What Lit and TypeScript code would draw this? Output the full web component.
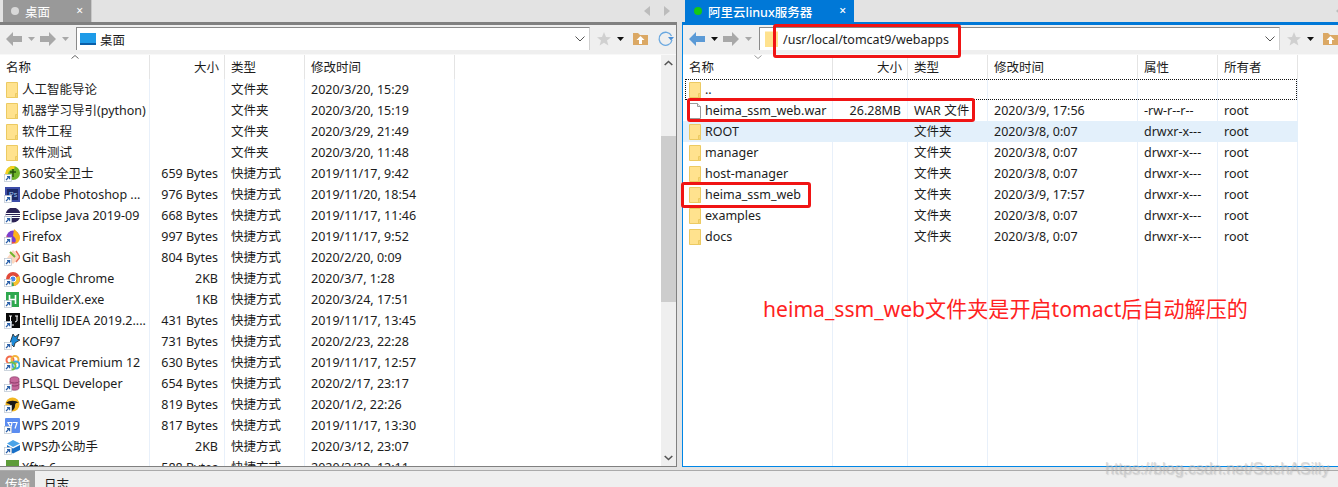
import { LitElement, html, css, svg } from "lit";
import { customElement } from "lit/decorators.js";

const folder = svg`<path d="M2.500.5h11v15h-11z" fill="#ffe28e" stroke="#ecca62"/><path d="M13.500 11.500v4h-2v-4z" fill="#f6d676" stroke="#ecca62"/>`;
const fileI = svg`<path d="M2.500.5h8l3 3v12h-11z" fill="#fff" stroke="#9a9a9a"/><path d="M10.500.5v3h3" fill="#eee" stroke="#9a9a9a"/>`;
const arrow = svg`<rect x=".5" y="8.500" width="7" height="7" fill="#fff" stroke="#b8c4d0" stroke-width=".7"/><path d="M2 14l3-3M3 10.600h2.600v2.600" stroke="#2a5fa8" stroke-width="1.200" fill="none"/>`;
const appIcons: Record<string, unknown> = {
  s360: svg`<circle cx="9" cy="7" r="7" fill="#6fb52c"/><path d="M2.500 8a7 7 0 0 1 8-6.500" stroke="#f4d020" stroke-width="3" fill="none"/><path d="M6 6h6M9 3v8" stroke="#24500c" stroke-width="1.400"/>`,
  ps: svg`<rect x="1" y="0" width="15" height="15" fill="#3c4ca8"/><rect x="3" y="2" width="11" height="11" fill="#1d2a66"/><text x="5" y="10" font-size="7" font-family="Liberation Sans" fill="#9cc4f0">Ps</text>`,
  eclipse: svg`<circle cx="9" cy="7" r="7.500" fill="#2c2255"/><path d="M1.500 5.500h15M1.500 7.500h15M2 9.500h14" stroke="#fff" stroke-width="1"/>`,
  firefox: svg`<circle cx="9" cy="8" r="6.500" fill="#7b3fd0"/><path d="M10 0c3 3 6 5 6 9a6 6 0 0 1-6 6c3-3 2-6-1-8z" fill="#ffb31a"/><path d="M3 6c1 5 5 8 9 7-3 3-9 2-10-3z" fill="#f2503c"/>`,
  git: svg`<path d="M9 0l7 7-7 7-6-6z" fill="#fbd8c0"/><path d="M12 1l4 6-4 5" stroke="#e8705a" stroke-width="1.500" fill="none"/><path d="M6 2l5 5" stroke="#6fb52c" stroke-width="2"/>`,
  chrome: svg`<circle cx="9" cy="8" r="7" fill="#e04a3a"/><path d="M9 8L3 12a7 7 0 0 0 7 3z" fill="#3aa655"/><path d="M9 8l6-3a7 7 0 0 1-5 10z" fill="#f6c32c"/><circle cx="9" cy="8" r="3" fill="#4a88e8" stroke="#fff"/>`,
  hb: svg`<rect x="2" y="0" width="13" height="15" fill="#2ea84e"/><path d="M5.500 3v9M11.500 3v9M5.500 7.500h6" stroke="#fff" stroke-width="1.600"/>`,
  idea: svg`<rect x="2" y="0" width="14" height="15" fill="#0a0a0a"/><path d="M5 3h3M6.500 3v6M5 9h3M11 3h3M13 3v5l-2 1" stroke="#fff" stroke-width="1" fill="none"/><path d="M5 12h5" stroke="#fff"/>`,
  kof: svg`<path d="M6 9l3-9 2 3 4-3-2 5 3 1-5 3-1 4z" fill="#1d8ad8" stroke="#111" stroke-width=".7"/>`,
  navicat: svg`<circle cx="6" cy="5" r="3.500" fill="none" stroke="#f26a4a" stroke-width="2"/><circle cx="11" cy="4.500" r="3.500" fill="none" stroke="#f3b33c" stroke-width="2"/><circle cx="12" cy="10" r="3.500" fill="none" stroke="#3aa8e0" stroke-width="2"/><circle cx="8" cy="11" r="3.500" fill="none" stroke="#6cc04a" stroke-width="2"/>`,
  plsql: svg`<path d="M6 3c0-3 9-3 9 0v9c0 3-9 3-9 0z" fill="#c6679a" stroke="#8a3a68" stroke-width=".7"/><path d="M6 5.500c1 2 8 2 9 0M6 8.500c1 2 8 2 9 0" stroke="#8a3a68" fill="none"/>`,
  wegame: svg`<circle cx="8.500" cy="7.500" r="7" fill="#f3b61f"/><path d="M2 6c3-3 10-3 13 0-3-1-4 1-4 3 0 2-2 5-4 5 2-3 1-7-5-8z" fill="#181818"/>`,
  wps: svg`<rect x="1" y="0" width="15" height="15" rx="1" fill="#5b8cf0"/><path d="M4 4.500h4l-1 5zM9 4.500h4l-2 6" fill="none" stroke="#fff" stroke-width="1.200"/>`,
  wpsh: svg`<path d="M9 1l7 3.500-7 3.500-6-3.500z" fill="#4aa3e8"/><path d="M3 6l6 3.500 7-3.500v5l-7 3.500-6-3.500z" fill="#1970c8"/>`,
  xftp: svg`<rect x="2" y="0" width="13" height="14" fill="#5e9c3a"/>`,
};

type Row = { n: string; s?: string; t: string; d: string; a?: string; o?: string; i: string };
const F = "文件夹", L = "快捷方式";
const leftRows: Row[] = [
  { n: "人工智能导论", t: F, d: "2020/3/20, 15:29", i: "f" },
  { n: "机器学习导引(python)", t: F, d: "2020/3/20, 15:19", i: "f" },
  { n: "软件工程", t: F, d: "2020/3/29, 21:49", i: "f" },
  { n: "软件测试", t: F, d: "2020/3/20, 11:48", i: "f" },
  { n: "360安全卫士", s: "659 Bytes", t: L, d: "2019/11/17, 9:42", i: "s360" },
  { n: "Adobe Photoshop ...", s: "976 Bytes", t: L, d: "2019/11/20, 18:54", i: "ps" },
  { n: "Eclipse Java 2019-09", s: "668 Bytes", t: L, d: "2019/11/17, 11:46", i: "eclipse" },
  { n: "Firefox", s: "997 Bytes", t: L, d: "2019/11/17, 9:52", i: "firefox" },
  { n: "Git Bash", s: "804 Bytes", t: L, d: "2020/2/20, 0:09", i: "git" },
  { n: "Google Chrome", s: "2KB", t: L, d: "2020/3/7, 1:28", i: "chrome" },
  { n: "HBuilderX.exe", s: "1KB", t: L, d: "2020/3/24, 17:51", i: "hb" },
  { n: "IntelliJ IDEA 2019.2....", s: "431 Bytes", t: L, d: "2019/11/17, 13:45", i: "idea" },
  { n: "KOF97", s: "731 Bytes", t: L, d: "2020/2/23, 22:28", i: "kof" },
  { n: "Navicat Premium 12", s: "630 Bytes", t: L, d: "2019/11/17, 12:57", i: "navicat" },
  { n: "PLSQL Developer", s: "654 Bytes", t: L, d: "2020/2/17, 23:17", i: "plsql" },
  { n: "WeGame", s: "819 Bytes", t: L, d: "2020/1/2, 22:26", i: "wegame" },
  { n: "WPS 2019", s: "817 Bytes", t: L, d: "2019/11/17, 13:30", i: "wps" },
  { n: "WPS办公助手", s: "2KB", t: L, d: "2020/3/12, 23:07", i: "wpsh" },
  { n: "Xftp 6", s: "588 Bytes", t: L, d: "2020/3/20, 12:11", i: "xftp" },
];
const dr = { a: "drwxr-x---", o: "root" };
const rightRows: Row[] = [
  { n: "..", t: "", d: "", i: "f" },
  { n: "heima_ssm_web.war", s: "26.28MB", t: "WAR 文件", d: "2020/3/9, 17:56", a: "-rw-r--r--", o: "root", i: "file" },
  { n: "ROOT", t: F, d: "2020/3/8, 0:07", ...dr, i: "f" },
  { n: "manager", t: F, d: "2020/3/8, 0:07", ...dr, i: "f" },
  { n: "host-manager", t: F, d: "2020/3/8, 0:07", ...dr, i: "f" },
  { n: "heima_ssm_web", t: F, d: "2020/3/9, 17:57", ...dr, i: "f" },
  { n: "examples", t: F, d: "2020/3/8, 0:07", ...dr, i: "f" },
  { n: "docs", t: F, d: "2020/3/8, 0:07", ...dr, i: "f" },
];

function rowIcon(i: string) {
  const body = i === "f" ? folder : i === "file" ? fileI : svg`${appIcons[i]}${arrow}`;
  return html`<svg class="ricon" viewBox="0 0 16 16" width="16" height="16">${body}</svg>`;
}

const caret = (dark: boolean) =>
  html`<svg class="caret" width="7" height="4" viewBox="0 0 7 4"><path d="M0 0h7L3.500 4z" fill=${dark ? "#111" : "#a8a8a8"}/></svg>`;
const navArrow = (dir: "l" | "r", color: string) =>
  html`<svg width="16" height="14" viewBox="0 0 16 14"><path d=${dir === "l" ? "M0 7l7-7v4h9v6H7v4z" : "M16 7L9 0v4H0v6h9v4z"} fill=${color}/></svg>`;

@customElement("app-root")
export class AppRoot extends LitElement {
  static styles = css`
    :host {
      display: block;
      position: relative;
      width: 1338px;
      height: 487px;
      overflow: hidden;
      background: #f0f0f0;
      font-family: "Noto Sans", "Noto Sans CJK SC", sans-serif;
      font-size: 12.5px;
      color: #1c1c1c;
    }
    .main { display: flex; height: 470px; background: #e3e3e3; }
    .pane { display: flex; flex-direction: column; height: 467px; }
    .pane.l { width: 677px; }
    .pane.r { width: 656px; margin-left: 5px; flex: 1; }
    .tabs { display: flex; align-items: flex-start; height: 22px; background: #e3e3e3; flex: none; position: relative; }
    .tab { height: 22px; display: flex; align-items: center; color: #fff; font-size: 12.5px; box-sizing: border-box; }
    .l .tab { margin-left: 3px; width: 89px; background: #999; padding-left: 8px; border-right: 1px solid #c8c8c8; }
    .r .tab { margin-left: 3px; width: 169px; background: #0078d7; padding-left: 9px; font-weight: 500; }
    .dot { width: 8px; height: 8px; border-radius: 50%; background: #d8d8d8; margin-right: 6px; }
    .r .dot { background: #15c815; }
    .tab .x { margin-left: auto; margin-right: 8px; font-size: 12px; line-height: 1; }
    .tnav { margin-left: auto; display: flex; gap: 14px; padding: 2px 7px 0 0; align-items: center; height: 18px; }
    .r .tnav { padding-right: 0; margin-right: -4px; }
    .tri { width: 0; height: 0; border-top: 5px solid transparent; border-bottom: 5px solid transparent; }
    .tri.a { border-right: 6px solid #bcbcbc; }
    .tri.b { border-left: 6px solid #bcbcbc; }
    .band { height: 3px; flex: none; background: #808080; }
    .r .band { background: #0078d7; }
    .body { flex: 1; display: flex; flex-direction: column; min-height: 0; background: #fff; border-bottom: 1px solid #808080; border-right: 1px solid #808080; }
    .r .body { border: 0; border-left: 1px solid #0086e6; border-bottom: 1px solid #0086e6; }
    .toolbar { height: 29px; flex: none; background: #efefef; display: flex; align-items: flex-start; box-sizing: border-box; padding-top: 2px; }
    .nav { display: flex; align-items: center; height: 23px; width: 76px; padding-left: 6px; box-sizing: border-box; flex: none; }
    .nav .caret { margin: 0 0 0 6px; }
    .nav svg + .caret + svg { margin-left: 5px; }
    .addr { flex: 1; height: 23px; box-sizing: border-box; background: #fff; border: 1px solid #8a8a8a; border-right-color: #d0d0d0; border-bottom: 0; display: flex; align-items: center; padding-left: 3px; gap: 4px; font-size: 12.5px; }
    .addr .chev { margin-left: auto; margin-right: 4px; }
    .addr .path { margin-left: 0; }
    .tools { width: 86px; flex: none; display: flex; align-items: center; height: 23px; padding-left: 7px; box-sizing: border-box; overflow: hidden; }
    .r .tools { width: 58px; }
    .tools svg { flex: none; }
    .tools .caret { margin: 0 9px 0 6px; }
    .tools .fup { margin-right: 10px; }
    .content { flex: 1; min-height: 0; display: flex; border-top: 1px solid #f8f8f8; }
    .list {
      flex: 1; position: relative; overflow: hidden;
      background-repeat: no-repeat; background-size: 1px 100%;
      background-image: linear-gradient(#e8f0fa, #e8f0fa), linear-gradient(#e8f0fa, #e8f0fa), linear-gradient(#e8f0fa, #e8f0fa), linear-gradient(#e8f0fa, #e8f0fa), linear-gradient(#e8f0fa, #e8f0fa), linear-gradient(#e8f0fa, #e8f0fa);
    }
    .l .list { background-position: 149px 0, 224px 0, 304px 0, 454px 0, -9px 0, -9px 0; }
    .r .list { background-position: 149px 0, 224px 0, 304px 0, 454px 0, 534px 0, 614px 0; }
    .grid { display: grid; height: 21px; }
    .l .grid { grid-template-columns: 150px 75px 80px 150px; width: 455px; }
    .r .grid { grid-template-columns: 150px 75px 80px 150px 80px 80px; width: 615px; }
    .head { height: 24px; background: #fff; position: relative; }
    .head span { border-right: 1px solid #e4e4e4; display: flex; align-items: center; line-height: 23px; height: 24px; box-sizing: border-box; }
    .cell { display: flex; align-items: center; white-space: nowrap; overflow: hidden; min-width: 0; height: 21px; line-height: 21px; }
    .cell.name, .head .name { padding-left: 6px; }
    .cell.name { padding-left: 4px; gap: 2px; }
    .size { justify-content: flex-end; padding-right: 7px; }
    .head .size { padding-right: 5px; }
    .plain { padding-left: 6px; }
    .ricon { flex: none; }
    .sort { position: absolute; left: 71px; top: 0; }
    .up { background-color: #e3f0fb; }
    .dots { outline: 1px dotted #111; outline-offset: -1px; margin-left: 2px; width: 612px !important; }
    .dots .name { padding-left: 2px; }
    .scroll { width: 15px; flex: none; background: #efefef; display: flex; flex-direction: column; align-items: center; }
    .scroll .sp1 { height: 65px; flex: none; width: 100%; }
    .thumb { height: 166px; width: 100%; background: #cdcdcd; flex: none; }
    .scroll .sp2 { flex: 1; }
    .arr { flex: none; height: 16px; display: flex; align-items: center; justify-content: center; }
    .bottom { height: 17px; background: #efefef; border-top: 1px solid #aaa; display: flex; align-items: flex-start; box-sizing: border-box; font-size: 12.5px; overflow: hidden; }
    .btab { height: 16px; width: 35px; background: #a0a0a0; color: #fff; text-align: center; line-height: 28px; margin-right: 9px; flex: none; }
    .blog { line-height: 28px; height: 16px; }
    .mark { position: absolute; border: 3px solid #f01414; border-radius: 3px; box-sizing: border-box; pointer-events: none; }
    .m1 { left: 773px; top: 24px; width: 188px; height: 34px; }
    .m2 { left: 687px; top: 98px; width: 288px; height: 24px; }
    .m3 { left: 681px; top: 182px; width: 130px; height: 26px; }
    .note { position: absolute; left: 763px; top: 295px; color: #ff2222; font-size: 21.100px; line-height: 28px; white-space: nowrap; }
    .wm { position: absolute; left: 1105px; top: 459px; font-family: "Liberation Sans", sans-serif; font-size: 16px; line-height: 20px; color: rgba(190,190,190,.55); text-shadow: 1px 1px 1px rgba(120,120,120,.25); white-space: nowrap; }
  `;

  private tools() {
    return html`<div class="tools">
      <svg width="14" height="14" viewBox="0 0 14 14"><path d="M7 0l2 5 5 .3-4 3.200 1.400 5L7 10.700 2.600 13.500 4 8.500 0 5.300 5 5z" fill="#d0d0d0"/></svg>
      ${caret(true)}
      <svg class="fup" width="15" height="13" viewBox="0 0 15 13"><path d="M0 1h5l2 2h8v10H0z" fill="#dba864"/><path d="M7.500 4l4 4H9v4H6V8H3.500z" fill="#fff"/></svg>
      <svg width="16" height="16" viewBox="0 0 16 16"><path d="M13.500 5A6.500 6.500 0 1 0 14 9" fill="none" stroke="#6aa8e0" stroke-width="1.300"/><path d="M10 6h6l-3 3.500z" fill="#4a90d8"/></svg>
    </div>`;
  }

  private nav(active: boolean) {
    return html`<div class="nav">
      ${navArrow("l", active ? "#5b9ad6" : "#a8a8a8")}${caret(active)}${navArrow("r", "#a8a8a8")}${caret(false)}
    </div>`;
  }

  private chev() {
    return html`<svg class="chev" width="10" height="6" viewBox="0 0 10 6"><path d="M.5.5L5 5 9.500.5" fill="none" stroke="#555"/></svg>`;
  }

  private scrollbar() {
    return html`<div class="scroll">
      <div class="arr"><svg width="9" height="6" viewBox="0 0 9 6"><path d="M.7 5L4.500 1.500 8.300 5" fill="none" stroke="#555" stroke-width="1.600"/></svg></div>
      <div class="sp1"></div>
      <div class="thumb"></div>
      <div class="sp2"></div>
      <div class="arr"><svg width="9" height="6" viewBox="0 0 9 6"><path d="M.7 1L4.500 4.500 8.300 1" fill="none" stroke="#555" stroke-width="1.600"/></svg></div>
    </div>`;
  }

  render() {
    return html`
      <div class="main">
        <section class="pane l">
          <div class="tabs">
            <div class="tab"><i class="dot"></i>桌面<span class="x">×</span></div>
            <div class="tnav"><i class="tri a"></i><i class="tri b"></i></div>
          </div>
          <div class="band"></div>
          <div class="body">
            <div class="toolbar">
              ${this.nav(false)}
              <div class="addr">
                <svg width="16" height="12" viewBox="0 0 16 12"><rect width="16" height="12" fill="#1e9be8"/><rect y="10" width="16" height="2" fill="#0a5ea8"/></svg>
                <span>桌面</span>${this.chev()}
              </div>
              ${this.tools()}
            </div>
            <div class="content">
              <div class="list">
                <div class="grid head">
                  <span class="name">名称</span><span class="size">大小</span><span class="plain">类型</span><span class="plain">修改时间</span>
                  <svg class="sort" width="8" height="4" viewBox="0 0 8 4"><path d="M.5 3.500L4 .5l3.500 3" fill="none" stroke="#666"/></svg>
                </div>
                ${leftRows.map(
                  (r) => html`<div class="grid">
                    <div class="cell name">${rowIcon(r.i)}<span>${r.n}</span></div>
                    <div class="cell size">${r.s ?? ""}</div>
                    <div class="cell plain">${r.t}</div>
                    <div class="cell plain">${r.d}</div>
                  </div>`
                )}
              </div>
              ${this.scrollbar()}
            </div>
          </div>
        </section>
        <section class="pane r">
          <div class="tabs">
            <div class="tab"><i class="dot"></i>阿里云linux服务器<span class="x">×</span></div>
            <div class="tnav"><i class="tri a"></i></div>
          </div>
          <div class="band"></div>
          <div class="body">
            <div class="toolbar">
              ${this.nav(true)}
              <div class="addr">
                <svg width="16" height="16" viewBox="0 0 16 16"><path d="M2 .5h13V16H2z" fill="#ffe28e"/></svg>
                <span class="path">/usr/local/tomcat9/webapps</span>${this.chev()}
              </div>
              ${this.tools()}
            </div>
            <div class="content">
              <div class="list">
                <div class="grid head">
                  <span class="name">名称</span><span class="size">大小</span><span class="plain">类型</span><span class="plain">修改时间</span><span class="plain">属性</span><span class="plain">所有者</span>
                  <svg class="sort" width="8" height="4" viewBox="0 0 8 4"><path d="M.5.5L4 3.500 7.500.5" fill="none" stroke="#999"/></svg>
                </div>
                ${rightRows.map(
                  (r) => html`<div class="grid ${r.n === "ROOT" ? "up" : ""} ${r.n === ".." ? "dots" : ""}">
                    <div class="cell name">${rowIcon(r.i)}<span>${r.n}</span></div>
                    <div class="cell size">${r.s ?? ""}</div>
                    <div class="cell plain">${r.t}</div>
                    <div class="cell plain">${r.d}</div>
                    <div class="cell plain">${r.a ?? ""}</div>
                    <div class="cell plain">${r.o ?? ""}</div>
                  </div>`
                )}
              </div>
            </div>
          </div>
        </section>
      </div>
      <div class="bottom"><div class="btab">传输</div><div class="blog">日志</div></div>
      <div class="mark m1"></div>
      <div class="mark m2"></div>
      <div class="mark m3"></div>
      <div class="note">heima_ssm_web文件夹是开启tomact后自动解压的</div>
      <div class="wm">https://blog.csdn.net/SuchASilly</div>
    `;
  }
}
